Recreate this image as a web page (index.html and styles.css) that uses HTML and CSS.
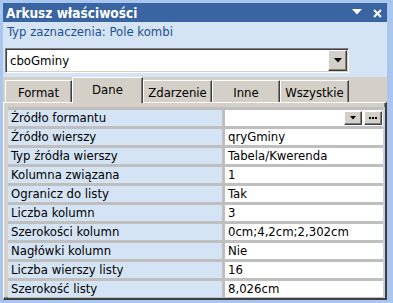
FILE: index.html
```html
<!DOCTYPE html>
<html lang="pl">
<head>
<meta charset="utf-8">
<title>Arkusz właściwości</title>
<link rel="stylesheet" href="styles.css">
</head>
<body>
<div class="frame">
  <div class="titlebar">
    <span class="title">Arkusz właściwości</span>
    <span class="tb-icons">
      <svg class="tb-menu" width="10" height="6" viewBox="0 0 10 6"><polygon points="0,0 10,0 5,5.5" fill="#fff"/></svg>
      <svg class="tb-close" width="9" height="9" viewBox="0 0 9 9"><path d="M1 1 L8 8 M8 1 L1 8" stroke="#fff" stroke-width="2"/></svg>
    </span>
  </div>
  <div class="selection">Typ zaznaczenia: Pole kombi</div>
  <div class="combo">
    <span class="combo-text">cboGminy</span>
    <span class="btn combo-btn"><svg width="8" height="5" viewBox="0 0 8 5"><polygon points="0,0 8,0 4,4.5" fill="#000"/></svg></span>
  </div>
  <div class="tabarea">
    <div class="tabs">
      <div class="tab t-format">Format</div>
      <div class="tab t-dane active">Dane</div>
      <div class="tab t-zd">Zdarzenie</div>
      <div class="tab t-inne">Inne</div>
      <div class="tab t-wsz">Wszystkie</div>
    </div>
    <div class="panel">
      <div class="grid">
        <div class="lbl">Źródło formantu</div>
        <div class="val val-btns">
          <span class="btn small-btn"><svg width="6" height="4" viewBox="0 0 6 4"><polygon points="0,0 6,0 3,3.5" fill="#000"/></svg></span>
          <span class="btn small-btn"><svg width="8" height="2" viewBox="0 0 8 2"><rect x="0" y="0" width="2" height="2" fill="#000"/><rect x="3" y="0" width="2" height="2" fill="#000"/><rect x="6" y="0" width="2" height="2" fill="#000"/></svg></span>
        </div>
        <div class="lbl">Źródło wierszy</div><div class="val">qryGminy</div>
        <div class="lbl">Typ źródła wierszy</div><div class="val">Tabela/Kwerenda</div>
        <div class="lbl">Kolumna związana</div><div class="val">1</div>
        <div class="lbl">Ogranicz do listy</div><div class="val">Tak</div>
        <div class="lbl">Liczba kolumn</div><div class="val">3</div>
        <div class="lbl">Szerokości kolumn</div><div class="val">0cm;4,2cm;2,302cm</div>
        <div class="lbl">Nagłówki kolumn</div><div class="val">Nie</div>
        <div class="lbl">Liczba wierszy listy</div><div class="val">16</div>
        <div class="lbl">Szerokość listy</div><div class="val">8,026cm</div>
      </div>
    </div>
  </div>
</div>
</body>
</html>
```

FILE: styles.css
```css
html, body {
  margin: 0;
  padding: 0;
  width: 393px;
  height: 303px;
  overflow: hidden;
  background: #a9c6ee;
  font-family: "DejaVu Sans", "Liberation Sans", Arial, sans-serif;
  font-stretch: condensed;
  font-size: 13px;
  color: #000;
}

.frame {
  margin: 3px 6px 0 3px;
  height: 297px;
  background: #d5e4f5;
  display: flex;
  flex-direction: column;
}

.titlebar {
  height: 19px;
  flex: none;
  background: #3a64a2;
  color: #fff;
  display: flex;
  align-items: center;
  padding-left: 3px;
  font-weight: bold;
  font-size: 13.5px;
}

.title {
  flex: 1;
}

.tb-icons {
  display: flex;
  align-items: center;
  gap: 11px;
  padding-right: 5px;
}

.tb-menu {
  display: block;
  margin-top: -1px;
}

.tb-close {
  display: block;
  margin-top: 1px;
}

.selection {
  flex: none;
  height: 24px;
  padding: 2px 0 0 4px;
  line-height: 15px;
  color: #1d4f8f;
}

.combo {
  flex: none;
  box-sizing: border-box;
  margin-left: 2px;
  width: 344px;
  height: 25px;
  background: #fff;
  border: 1px solid;
  border-color: #808080 #fff #fff #808080;
  box-shadow: inset 1px 1px 0 #404040, inset -1px -1px 0 #d4d0c8;
  padding: 1px;
  display: flex;
  align-items: center;
}

.combo-text {
  flex: 1;
  padding-left: 3px;
  line-height: 16px;
}

.btn {
  box-sizing: border-box;
  background: #d4d0c8;
  border: 1px solid;
  border-color: #fff #404040 #404040 #fff;
  box-shadow: inset -1px -1px 0 #808080;
  display: flex;
  align-items: center;
  justify-content: center;
}

.btn svg {
  display: block;
}

.combo-btn {
  width: 19px;
  align-self: stretch;
}

.tabarea {
  flex: 1;
  margin-top: 4px;
  background: #d4d0c8;
  display: flex;
  flex-direction: column;
}

.tabs {
  display: flex;
  height: 25px;
  padding-left: 2px;
  flex: none;
}

.tab {
  box-sizing: border-box;
  margin-top: 3px;
  height: 22px;
  border-top: 1px solid #fff;
  border-left: 1px solid #fff;
  border-right: 1px solid #404040;
  box-shadow: inset -1px 0 0 #808080;
  display: flex;
  align-items: center;
  justify-content: center;
  line-height: 15px;
  padding-top: 1px;
}

.tab.active {
  margin-top: 0;
  height: 26px;
  margin-bottom: -1px;
  position: relative;
  z-index: 1;
  background: #d4d0c8;
  padding-top: 0;
  padding-bottom: 3px;
}

.t-format { width: 67px; }
.t-dane { width: 71px; }
.t-zd { width: 69px; }
.t-inne { width: 68px; }
.t-wsz { width: 69px; }

.panel {
  flex: 1;
  border-top: 1px solid #fff;
  border-left: 1px solid #fff;
  border-right: 2px solid #404040;
  border-bottom: 2px solid #404040;
  box-shadow: inset -1px -1px 0 #808080;
  padding: 4px 0 0 4px;
}

.grid {
  display: grid;
  grid-template-columns: 214px 158px;
  grid-auto-rows: 16px;
  column-gap: 3px;
  row-gap: 3px;
  padding: 3px 0 1px 0;
  background: #bfbfbf;
  border-right: 2px solid #c9d3df;
  width: 375px;
}

.lbl {
  background: #d5e4f5;
  padding-left: 3px;
  line-height: 16px;
  white-space: nowrap;
}

.val {
  background: #fff;
  padding-left: 3px;
  line-height: 16px;
  white-space: nowrap;
}

.val-btns {
  display: flex;
  justify-content: flex-end;
  align-items: center;
  gap: 2px;
  padding-right: 1px;
}

.small-btn {
  width: 18px;
  height: 14px;
}
```
